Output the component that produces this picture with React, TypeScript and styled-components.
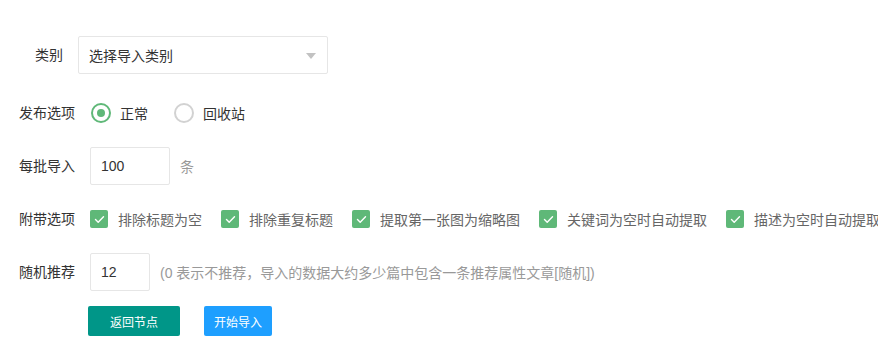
import React from "react";
import styled, { createGlobalStyle } from "styled-components";

const GlobalStyle = createGlobalStyle`
  html, body {
    margin: 0;
    padding: 0;
    background: #fff;
    overflow: hidden;
  }
  body {
    font-family: "Liberation Sans", "Noto Sans CJK SC", sans-serif;
    font-size: 14px;
    color: #333;
  }
`;

const Form = styled.div`
  padding-top: 36px;
  width: 878px;
  white-space: nowrap;
`;

const Row = styled.div<{ $gap?: number }>`
  display: flex;
  align-items: center;
  height: 38px;
  margin-bottom: ${(p) => p.$gap ?? 15}px;
`;

const Label = styled.label<{ $width?: number }>`
  flex: none;
  box-sizing: border-box;
  width: ${(p) => p.$width ?? 90}px;
  padding-right: 15px;
  text-align: right;
  color: #333;
  line-height: 20px;
`;

const SelectBox = styled.div`
  position: relative;
  box-sizing: border-box;
  width: 250px;
  height: 38px;
  border: 1px solid #e6e6e6;
  border-radius: 2px;
  padding-left: 10px;
  display: flex;
  align-items: center;
  color: #333;
`;

const Arrow = styled.span`
  position: absolute;
  right: 11px;
  top: 16px;
  width: 0;
  height: 0;
  border-left: 5px solid transparent;
  border-right: 5px solid transparent;
  border-top: 6px solid #c2c2c2;
`;

const Radio = styled.span`
  display: inline-flex;
  align-items: center;
  margin-left: 1px;
  margin-right: 25px;
  color: #333;
`;

const RadioCircle = styled.span<{ $on?: boolean }>`
  box-sizing: border-box;
  width: 20px;
  height: 20px;
  border-radius: 50%;
  border: 2px solid ${(p) => (p.$on ? "#5FB878" : "#d2d2d2")};
  margin-right: 9px;
  display: flex;
  align-items: center;
  justify-content: center;
  &::after {
    content: "";
    display: ${(p) => (p.$on ? "block" : "none")};
    width: 8px;
    height: 8px;
    border-radius: 50%;
    background: #5FB878;
  }
`;

const TextInput = styled.input<{ $width: number }>`
  box-sizing: border-box;
  width: ${(p) => p.$width}px;
  height: 38px;
  border: 1px solid #e6e6e6;
  border-radius: 2px;
  padding: 0 10px;
  font-family: "Liberation Sans", "Noto Sans CJK SC", sans-serif;
  font-size: 14px;
  color: #333;
  outline: none;
`;

const Hint = styled.span`
  margin-left: 10px;
  color: #999;
`;

const Check = styled.span`
  display: inline-flex;
  align-items: center;
  margin-right: 19px;
  color: #666;
`;

const CheckBox = styled.span`
  width: 18px;
  height: 18px;
  border-radius: 2px;
  background: #5FB878;
  margin-right: 10px;
  display: flex;
  align-items: center;
  justify-content: center;
`;

const Buttons = styled.div`
  display: flex;
  gap: 24px;
  padding-left: 88px;
`;

const Button = styled.button<{ $color: string; $pad: number }>`
  height: 30px;
  border: none;
  border-radius: 2px;
  padding: 0 ${(p) => p.$pad}px;
  background: ${(p) => p.$color};
  color: #fff;
  font-family: "Liberation Sans", "Noto Sans CJK SC", sans-serif;
  font-size: 12px;
  cursor: pointer;
`;

const options = [
  "排除标题为空",
  "排除重复标题",
  "提取第一张图为缩略图",
  "关键词为空时自动提取",
  "描述为空时自动提取",
];

function Tick() {
  return (
    <svg width="11" height="9" viewBox="0 0 11 9" fill="none">
      <path d="M1.5 4.6 L4.2 7.2 L9.5 1.8" stroke="#fff" strokeWidth="1.4" strokeLinecap="round" strokeLinejoin="round" />
    </svg>
  );
}

export default function App() {
  return (
    <>
      <GlobalStyle />
      <Form>
        <Row $gap={20}>
          <Label $width={78}>类别</Label>
          <SelectBox>
            选择导入类别
            <Arrow />
          </SelectBox>
        </Row>
        <Row>
          <Label>发布选项</Label>
          <Radio>
            <RadioCircle $on />
            正常
          </Radio>
          <Radio>
            <RadioCircle />
            回收站
          </Radio>
        </Row>
        <Row>
          <Label>每批导入</Label>
          <TextInput $width={80} defaultValue="100" />
          <Hint>条</Hint>
        </Row>
        <Row>
          <Label>附带选项</Label>
          {options.map((o) => (
            <Check key={o}>
              <CheckBox>
                <Tick />
              </CheckBox>
              {o}
            </Check>
          ))}
        </Row>
        <Row>
          <Label>随机推荐</Label>
          <TextInput $width={60} defaultValue="12" />
          <Hint>(0 表示不推荐，导入的数据大约多少篇中包含一条推荐属性文章[随机])</Hint>
        </Row>
        <Buttons>
          <Button $color="#009688" $pad={22}>返回节点</Button>
          <Button $color="#1E9FFF" $pad={10}>开始导入</Button>
        </Buttons>
      </Form>
    </>
  );
}
